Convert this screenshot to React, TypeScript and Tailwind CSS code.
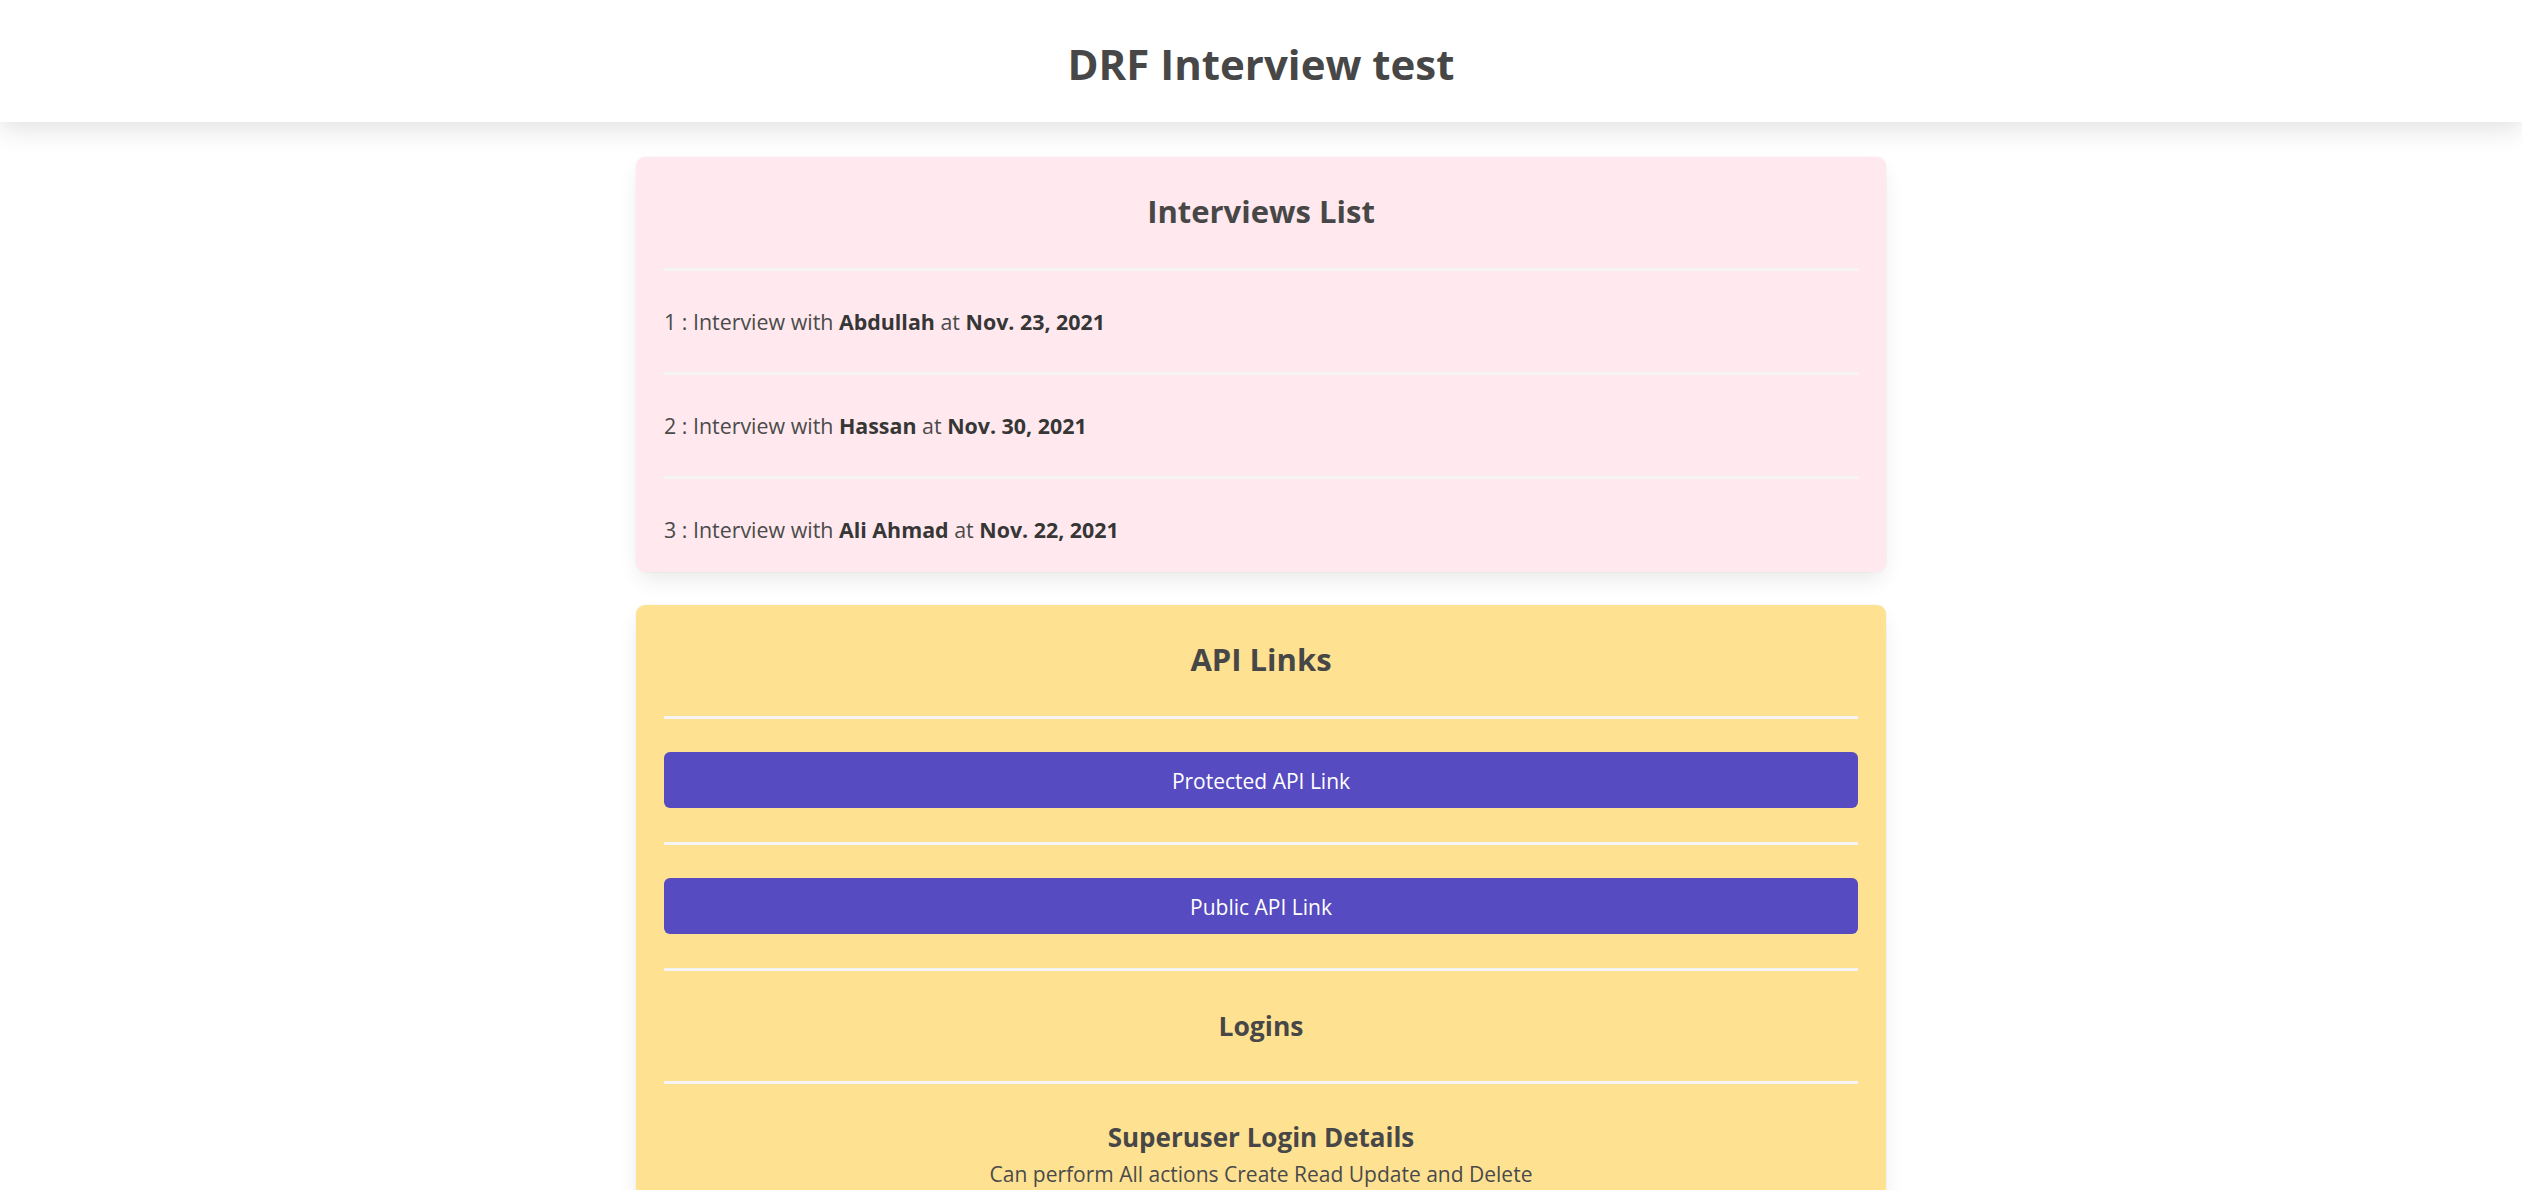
import React from "react";

const rows = [
  { n: 1, name: "Abdullah", date: "Nov. 23, 2021" },
  { n: 2, name: "Hassan", date: "Nov. 30, 2021" },
  { n: 3, name: "Ali Ahmad", date: "Nov. 22, 2021" },
];

function Divider() {
  return <div className="h-[3px] bg-[#f5f5f5]" />;
}

export default function App() {
  return (
    <div className="min-h-screen bg-white font-['Open_Sans',sans-serif] text-[#4a4a4a]">
      <header className="relative z-10 h-[122px] bg-white shadow-[0_6px_26px_rgba(10,10,10,0.13)] flex items-center justify-center">
        <h1 className="text-[42px] font-bold leading-none pt-[5px] text-[#474747]">DRF Interview test</h1>
      </header>

      <main className="w-[1250px] mx-auto pt-[35px] pb-10 flex flex-col gap-[33px]">
        <section className="bg-[#ffe9ee] rounded-[9px] shadow-[0_10px_22px_-4px_rgba(10,10,10,0.1),0_0_0_1px_rgba(10,10,10,0.02)] px-[28px] pt-[34px] pb-[28px]">
          <h2 className="text-[31px] font-bold leading-[40px] text-center text-[#474747] mb-[37px]">Interviews List</h2>
          {rows.map((r) => (
            <div key={r.n}>
              <Divider />
              <p className={`text-[21.4px] leading-[28px] pt-[37px] ${r.n === 3 ? "" : "pb-[36px]"}`}>
                {r.n} : Interview with <strong className="font-bold text-[#363636]">{r.name}</strong> at{" "}
                <strong className="font-bold text-[#363636]">{r.date}</strong>
              </p>
            </div>
          ))}
        </section>

        <section className="bg-[#fee292] rounded-[9px] shadow-[0_10px_22px_-4px_rgba(10,10,10,0.1),0_0_0_1px_rgba(10,10,10,0.02)] px-[28px] pt-[34px] pb-[40px]">
          <h2 className="text-[31px] font-bold leading-[40px] text-center text-[#474747] mb-[37px]">API Links</h2>
          <Divider />
          <a className="mt-[33px] mb-[34px] h-[56px] rounded-[6px] bg-[#564bc0] text-white text-[21px] leading-[28px] pt-[2px] flex items-center justify-center">
            Protected API Link
          </a>
          <Divider />
          <a className="mt-[33px] mb-[34px] h-[56px] rounded-[6px] bg-[#564bc0] text-white text-[21px] leading-[28px] pt-[2px] flex items-center justify-center">
            Public API Link
          </a>
          <Divider />
          <h3 className="h-[110px] pt-[2px] flex items-center justify-center text-[26.5px] font-bold text-[#474747]">Logins</h3>
          <Divider />
          <div className="pt-[37px] text-center">
            <h4 className="text-[26px] font-bold leading-[32px] text-[#474747]">Superuser Login Details</h4>
            <p className="mt-[7px] text-[21px] leading-[28px]">Can perform All actions Create Read Update and Delete</p>
            <p className="mt-[8px] text-[21px] leading-[28px]">
              Username: <strong className="text-[#363636]">admin</strong>
            </p>
            <p className="mt-[4px] text-[21px] leading-[28px]">
              Password: <strong className="text-[#363636]">admin</strong>
            </p>
          </div>
        </section>
      </main>
    </div>
  );
}
